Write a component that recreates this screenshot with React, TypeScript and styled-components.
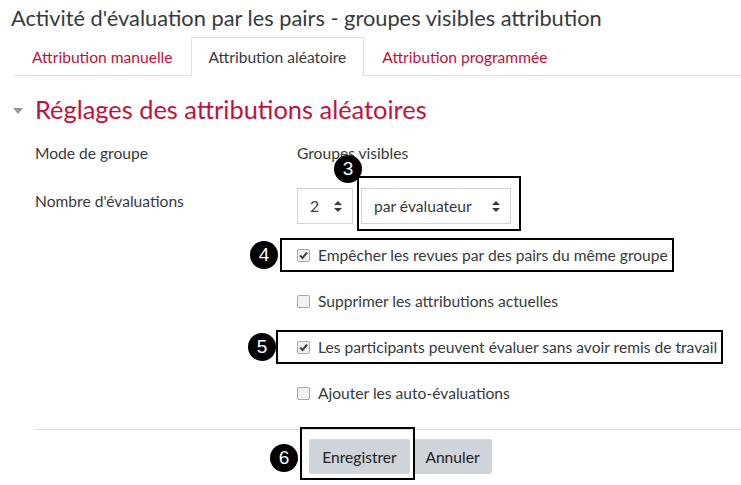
import React from 'react';
import styled, { createGlobalStyle } from 'styled-components';

const GlobalStyle = createGlobalStyle`
  body {
    margin: 0;
    background: #fff;
    font-family: Lato, "Open Sans", sans-serif;
    color: #373a3c;
  }
`;

const Page = styled.div`
  width: 741px;
  height: 485px;
  overflow: hidden;
  position: relative;
`;

const Title = styled.h2`
  margin: 0;
  padding: 5px 0 0 11px;
  font-size: 21.8px;
  font-weight: 400;
  line-height: 26px;
  color: #373a3c;
`;

const Tabs = styled.div`
  display: flex;
  align-items: flex-start;
  margin: 6px 0 0 14px;
  border-bottom: 1px solid #dee2e6;
`;

const Tab = styled.div<{ $active?: boolean }>`
  padding: 0 17px;
  height: ${(p) => (p.$active ? 38 : 37)}px;
  display: flex;
  align-items: center;
  font-size: 15.6px;
  color: ${(p) => (p.$active ? '#373a3c' : '#c0123c')};
  border: 1px solid ${(p) => (p.$active ? '#dee2e6' : 'transparent')};
  border-bottom: none;
  margin-bottom: ${(p) => (p.$active ? -1 : 0)}px;
  background: ${(p) => (p.$active ? '#fff' : 'transparent')};
`;

const SectionHead = styled.div`
  display: flex;
  align-items: center;
  margin: 16px 0 0 13px;
  height: 34px;
`;

const Caret = styled.span`
  width: 0;
  height: 0;
  border-left: 5px solid transparent;
  border-right: 5px solid transparent;
  border-top: 6px solid #999;
  margin: 4px 12px 0 0;
`;

const Heading = styled.h3`
  margin: 0;
  font-size: 25.4px;
  font-weight: 400;
  color: #c0123c;
`;

const Form = styled.div`
  margin: 14px 0 0 35px;
  display: grid;
  grid-template-columns: 262px 1fr;
  align-items: start;
`;

const Label = styled.div<{ $h: number }>`
  font-size: 15.6px;
  line-height: 22px;
  min-height: ${(p) => p.$h}px;
  padding-top: 2px;
`;

const Value = styled.div<{ $h: number }>`
  font-size: 15.6px;
  line-height: 22px;
  min-height: ${(p) => p.$h}px;
  display: flex;
  align-items: flex-start;
`;

const Plain = styled.div`
  padding-top: 2px;
`;

const Select = styled.div<{ $w: number }>`
  width: ${(p) => p.$w}px;
  height: 36px;
  box-sizing: border-box;
  border: 1px solid #ced4da;
  display: flex;
  align-items: center;
  justify-content: space-between;
  padding: 0 10px 0 12px;
  font-size: 15.6px;
  color: #373a3c;
  margin-right: 8px;
`;

const Annotated = styled.div`
  position: relative;
  display: inline-flex;
  align-self: flex-start;
`;

const Frame = styled.div<{ $t: number; $r: number; $b: number; $l: number }>`
  position: absolute;
  top: ${(p) => -p.$t}px;
  right: ${(p) => -p.$r}px;
  bottom: ${(p) => -p.$b}px;
  left: ${(p) => -p.$l}px;
  border: 2px solid #000;
  pointer-events: none;
`;

const Badge = styled.div<{ $x: number; $y: number }>`
  position: absolute;
  left: ${(p) => p.$x}px;
  top: ${(p) => p.$y}px;
  width: 28px;
  height: 28px;
  border-radius: 50%;
  background: #000;
  color: #fff;
  font-family: "Liberation Sans", Arial, sans-serif;
  font-size: 19px;
  display: flex;
  align-items: center;
  justify-content: center;
  z-index: 2;
`;

const CheckRow = styled.label`
  display: flex;
  align-items: center;
  height: 22px;
  font-size: 15.6px;
  color: #373a3c;
`;

const Box = styled.span`
  width: 11px;
  height: 11px;
  border: 1px solid #a8a8a8;
  border-radius: 2px;
  background: #f2f2f2;
  margin-right: 8px;
  display: flex;
  align-items: center;
  justify-content: center;
`;

const Checks = styled.div`
  display: flex;
  flex-direction: column;
  align-items: flex-start;
  gap: 24px;
`;

const Spacer = styled.div`
  height: 25px;
`;

const Rule = styled.div`
  margin: 0 0 0 35px;
  border-top: 1px solid #dee2e6;
`;

const Buttons = styled.div`
  display: flex;
  gap: 3px;
  padding: 9px 0 0 309px;
`;

const Button = styled.div<{ $w: number }>`
  width: ${(p) => p.$w}px;
  height: 35px;
  background: #ced4da;
  border-radius: 3px;
  display: flex;
  align-items: center;
  justify-content: center;
  font-size: 15.6px;
  color: #1d2125;
`;

const Sort = () => (
  <svg width="8" height="11" viewBox="0 0 8 11">
    <path d="M4 0 L8 4 L0 4 Z M4 11 L8 7 L0 7 Z" fill="#373a3c" />
  </svg>
);

const Check = ({ on }: { on?: boolean }) => (
  <Box>
    {on && (
      <svg width="9" height="9" viewBox="0 0 9 9">
        <path d="M1 4.5 L3.5 7 L8 1.5" stroke="#444" strokeWidth="2" fill="none" />
      </svg>
    )}
  </Box>
);

export default function App() {
  return (
    <Page>
      <GlobalStyle />
      <Title>Activité d'évaluation par les pairs - groupes visibles attribution</Title>
      <Tabs>
        <Tab>Attribution manuelle</Tab>
        <Tab $active>Attribution aléatoire</Tab>
        <Tab>Attribution programmée</Tab>
      </Tabs>
      <SectionHead>
        <Caret />
        <Heading>Réglages des attributions aléatoires</Heading>
      </SectionHead>
      <Form>
        <Label $h={46}>Mode de groupe</Label>
        <Value $h={46}>
          <Plain>Groupes visibles</Plain>
        </Value>
        <Label $h={54}>Nombre d'évaluations</Label>
        <Value $h={54}>
          <Select $w={56}>
            2 <Sort />
          </Select>
          <Annotated>
            <Select $w={150}>
              par évaluateur <Sort />
            </Select>
            <Frame $t={12} $r={2} $b={7} $l={4} />
            <Badge $x={-27} $y={-33}>3</Badge>
          </Annotated>
        </Value>
        <div />
        <Checks>
          <Annotated>
            <CheckRow>
              <Check on />
              Empêcher les revues par des pairs du même groupe
            </CheckRow>
            <Frame $t={6} $r={6} $b={6} $l={17} />
            <Badge $x={-47} $y={-3}>4</Badge>
          </Annotated>
          <CheckRow>
            <Check />
            Supprimer les attributions actuelles
          </CheckRow>
          <Annotated>
            <CheckRow>
              <Check on />
              Les participants peuvent évaluer sans avoir remis de travail
            </CheckRow>
            <Frame $t={6} $r={6} $b={6} $l={21} />
            <Badge $x={-49} $y={-3}>5</Badge>
          </Annotated>
          <CheckRow>
            <Check />
            Ajouter les auto-évaluations
          </CheckRow>
        </Checks>
      </Form>
      <Spacer />
      <Rule />
      <Buttons>
        <Annotated>
          <Button $w={101}>Enregistrer</Button>
          <Frame $t={12} $r={5} $b={6} $l={9} />
          <Badge $x={-39} $y={5}>6</Badge>
        </Annotated>
        <Button $w={79}>Annuler</Button>
      </Buttons>
    </Page>
  );
}
